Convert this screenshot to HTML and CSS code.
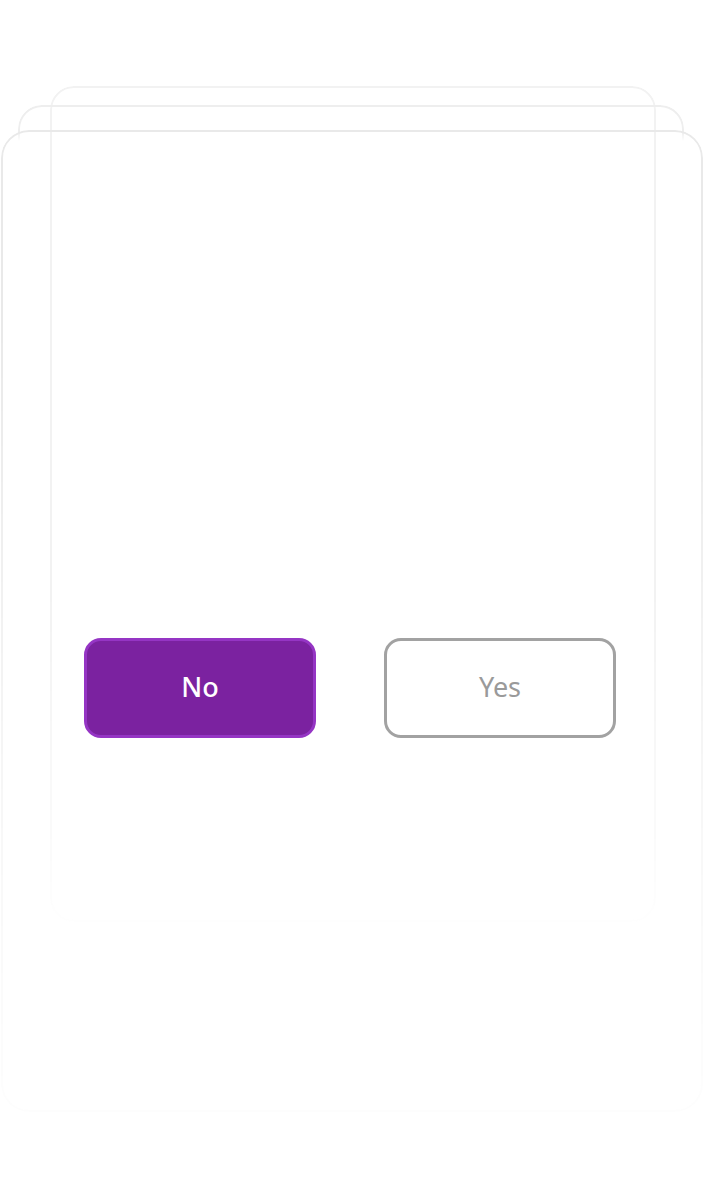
FILE: index.html
```html
<!DOCTYPE html>
<html>
<head>
<meta charset="utf-8">
<link rel="stylesheet" href="styles.css">
</head>
<body>
<div class="stack">
  <div class="card card-back"></div>
  <div class="card card-mid"></div>
  <div class="card card-front">
    <div class="actions">
      <button class="btn btn-no">No</button>
      <button class="btn btn-yes">Yes</button>
    </div>
  </div>
</div>
</body>
</html>
```
FILE: styles.css
```css
html, body {
  margin: 0;
  padding: 0;
  background: #ffffff;
  width: 704px;
  height: 1182px;
  overflow: hidden;
  font-family: "Noto Sans", "Liberation Sans", sans-serif;
}
.stack {
  position: relative;
  padding-top: 130px;
}
.card {
  box-sizing: border-box;
}
.card-back {
  position: absolute;
  left: 50px;
  top: 86px;
  width: 606px;
  height: 836px;
  border: 2px solid #f2f2f2;
  border-radius: 24px;
  -webkit-mask-image: linear-gradient(to bottom, #000 0%, #000 60%, rgba(0,0,0,0.35) 90%, rgba(0,0,0,0.05) 100%);
  mask-image: linear-gradient(to bottom, #000 0%, #000 60%, rgba(0,0,0,0.35) 90%, rgba(0,0,0,0.05) 100%);
}
.card-mid {
  position: absolute;
  left: 18px;
  top: 105px;
  width: 666px;
  height: 60px;
  border: 2px solid #eeeeee;
  border-bottom: none;
  border-radius: 24px 24px 0 0;
  -webkit-mask-image: linear-gradient(to bottom, #000 0%, #000 45%, transparent 60%);
  mask-image: linear-gradient(to bottom, #000 0%, #000 45%, transparent 60%);
}
.card-front {
  position: relative;
  margin: 0 1px;
  height: 982px;
  padding-top: 508px;
}
.card-front::before {
  content: "";
  position: absolute;
  inset: 0;
  border: 2px solid #e9e9e9;
  border-radius: 28px;
  box-shadow: 0 -1px 2px rgba(0,0,0,0.04);
  -webkit-mask-image: linear-gradient(to bottom, #000 0%, #000 20%, rgba(0,0,0,0.35) 70%, rgba(0,0,0,0.08) 100%);
  mask-image: linear-gradient(to bottom, #000 0%, #000 20%, rgba(0,0,0,0.35) 70%, rgba(0,0,0,0.08) 100%);
  pointer-events: none;
}
.actions {
  position: relative;
  display: flex;
  justify-content: space-between;
  padding: 0 87px 0 83px;
}
.btn {
  box-sizing: border-box;
  width: 232px;
  height: 100px;
  padding: 0 0 4px 0;
  border-radius: 17px;
  font-family: "Noto Sans", "Liberation Sans", sans-serif;
  font-size: 27px;
  line-height: 1;
  cursor: pointer;
}
.btn-no {
  background: #7b22a0;
  border: 3px solid #9535c4;
  color: #ffffff;
  font-weight: 500;
}
.btn-yes {
  background: #ffffff;
  border: 3px solid #a2a2a2;
  color: #9a9a9a;
  font-weight: 400;
}
```
